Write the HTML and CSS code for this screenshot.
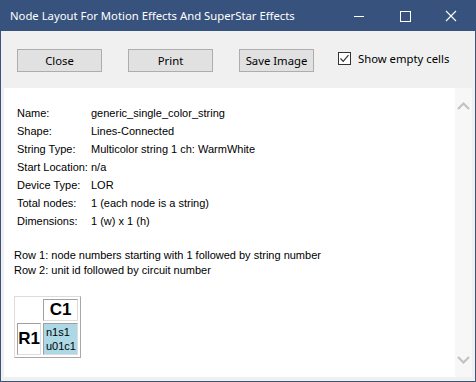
FILE: index.html
```html
<!DOCTYPE html>
<html lang="en">
<head>
  <meta charset="UTF-8" />
  <title>Node Layout</title>
  <link rel="stylesheet" href="styles.css">
</head>
<body>
  <div class="window">

    <!-- Title bar -->
    <div class="titlebar">
      <span class="title">Node Layout For Motion Effects And SuperStar Effects</span>
      <div class="controls">
        <svg class="ctl" width="46" height="30" viewBox="0 0 46 30">
          <line x1="16" y1="15.5" x2="26" y2="15.5" stroke="#fff" stroke-width="1"/>
        </svg>
        <svg class="ctl" width="46" height="30" viewBox="0 0 46 30">
          <rect x="16.5" y="10.5" width="10" height="10" fill="none" stroke="#fff" stroke-width="1"/>
        </svg>
        <svg class="ctl" width="46" height="30" viewBox="0 0 46 30">
          <path d="M16 10 L26 20 M26 10 L16 20" stroke="#fff" stroke-width="1.1"/>
        </svg>
      </div>
    </div>

    <!-- Buttons -->
    <div class="toolbar">
      <button class="btn">Close</button>
      <button class="btn">Print</button>
      <button class="btn btn-save">Save Image</button>
      <label class="check">
        <span class="box">
          <svg width="11" height="11" viewBox="0 0 11 11">
            <path d="M1.5 5.5 L4.2 8.3 L9.5 2.2" fill="none" stroke="#333" stroke-width="1.2"/>
          </svg>
        </span>
        Show empty cells
      </label>
    </div>

    <!-- Content -->
    <div class="content">
      <div class="panel">
        <div class="info">
          <span>Name:</span><span>generic_single_color_string</span>
          <span>Shape:</span><span>Lines-Connected</span>
          <span>String Type:</span><span>Multicolor string 1 ch: WarmWhite</span>
          <span>Start Location:</span><span>n/a</span>
          <span>Device Type:</span><span>LOR</span>
          <span>Total nodes:</span><span>1 (each node is a string)</span>
          <span>Dimensions:</span><span>1 (w) x 1 (h)</span>
        </div>

        <div class="legend">
          <div>Row 1: node numbers starting with 1 followed by string number</div>
          <div>Row 2: unit id followed by circuit number</div>
        </div>

        <table class="grid">
          <tr>
            <td class="corner"></td>
            <td class="head col">C1</td>
          </tr>
          <tr>
            <td class="head row">R1</td>
            <td class="node">n1s1<br>u01c1</td>
          </tr>
        </table>
      </div>
      <div class="scrollbar">
        <svg width="17" height="14" viewBox="0 0 17 14">
          <path d="M3 10 L8.5 4.5 L14 10" fill="none" stroke="#c2c2c2" stroke-width="2.2"/>
        </svg>
        <svg width="17" height="14" viewBox="0 0 17 14">
          <path d="M3 4 L8.5 9.5 L14 4" fill="none" stroke="#c2c2c2" stroke-width="2.2"/>
        </svg>
      </div>
    </div>

  </div>
</body>
</html>
```

FILE: styles.css
```css
* {
  margin: 0;
  padding: 0;
  box-sizing: border-box;
}

body {
  width: 476px;
  height: 382px;
  overflow: hidden;
  background: #f0f0f0;
  font-family: "Liberation Sans", Arial, sans-serif;
}

.window {
  width: 476px;
  height: 382px;
  border: 1px solid #3a547c;
  border-top: none;
  display: flex;
  flex-direction: column;
  background: #f0f0f0;
}

.titlebar {
  height: 31px;
  background: #37527d;
  margin: 0 -1px;
  display: flex;
  align-items: center;
  justify-content: space-between;
  color: #fff;
}

.title {
  padding-left: 10px;
  font-family: "Noto Sans", "Open Sans", sans-serif;
  font-size: 11.3px;
  margin-top: -1px;
}

.controls {
  display: flex;
  height: 31px;
  align-items: center;
}

.ctl {
  display: block;
}

.toolbar {
  height: 57px;
  display: flex;
  align-items: center;
  padding: 0 0 0 16px;
  gap: 26px;
  font-family: "Noto Sans", "Open Sans", sans-serif;
  font-size: 11.3px;
}

.btn {
  width: 85px;
  height: 23px;
  background: #e1e1e1;
  border: 1px solid #adadad;
  font-family: inherit;
  font-size: 11.3px;
  color: #000;
  margin-top: 1px;
}

.btn-save {
  width: 75px;
}

.check {
  display: flex;
  align-items: center;
  gap: 7px;
  color: #000;
  margin-left: -2px;
  margin-top: -3px;
}

.box {
  width: 13px;
  height: 13px;
  border: 1px solid #333;
  background: #fff;
  display: flex;
  align-items: center;
  justify-content: center;
}

.content {
  flex: 1;
  display: flex;
  margin: 0 3px 4px 3px;
}

.panel {
  flex: 1;
  background: #fff;
  padding: 16px 0 0 10px;
  font-size: 11px;
  color: #000;
}

.info {
  display: grid;
  grid-template-columns: 74px auto;
  grid-auto-rows: 18px;
  align-items: center;
  padding-left: 3px;
}

.legend {
  margin-top: 18px;
  line-height: 15px;
}

.grid {
  margin-top: 18px;
  border: 1px solid;
  border-color: #dcdcdc #a8a8a8 #a8a8a8 #dcdcdc;
  border-spacing: 2px;
}

.grid td {
  padding: 0;
}

.corner {
  width: 24px;
}

.head {
  font-weight: bold;
  font-size: 17px;
  text-align: center;
  border: 1px solid;
  border-color: #a0a0a0 #dcdcdc #dcdcdc #a0a0a0;
}

.col {
  width: 35px;
  height: 22px;
}

.row {
  height: 32px;
}

.node {
  background: #add8e6;
  border: 1px solid;
  border-color: #a0a0a0 #dcdcdc #dcdcdc #a0a0a0;
  font-size: 11px;
  line-height: 14px;
  padding-left: 2px !important;
}

.scrollbar {
  width: 17px;
  background: #f7f7f7;
  display: flex;
  flex-direction: column;
  justify-content: space-between;
  padding: 11px 0 10px 0;
}

.scrollbar svg {
  display: block;
}
```
